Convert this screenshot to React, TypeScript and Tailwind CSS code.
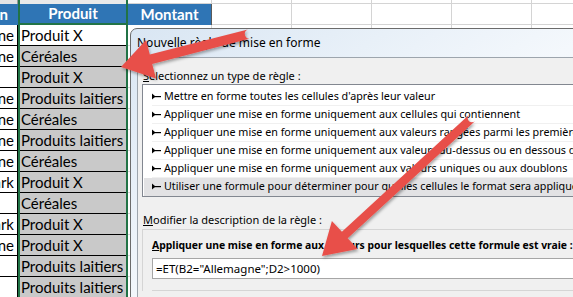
import React from "react";

type Pt = [number, number];

const ROWS: [string, string, boolean][] = [
  ["Allemagne", "Produit X", false],
  ["Allemagne", "Céréales", true],
  ["", "Produit X", true],
  ["Allemagne", "Produits laitiers", true],
  ["Allemagne", "Céréales", true],
  ["Allemagne", "Produits laitiers", true],
  ["Allemagne", "Céréales", true],
  ["Danemark", "Produit X", true],
  ["", "Céréales", true],
  ["Danemark", "Produit X", true],
  ["Allemagne", "Produit X", true],
  ["", "Produits laitiers", true],
  ["", "Produits laitiers", true],
];

const RULES = [
  "Mettre en forme toutes les cellules d'après leur valeur",
  "Appliquer une mise en forme uniquement aux cellules qui contiennent",
  "Appliquer une mise en forme uniquement aux valeurs rangées parmi les premières ou les dernières valeurs",
  "Appliquer une mise en forme uniquement aux valeurs au-dessus ou en dessous de la moyenne",
  "Appliquer une mise en forme uniquement aux valeurs uniques ou aux doublons",
  "Utiliser une formule pour déterminer pour quelles cellules le format sera appliqué",
];

const cellFont = { fontFamily: "Lato, 'Liberation Sans', sans-serif" };
const uiFont = { fontFamily: "'Noto Sans', 'Liberation Sans', sans-serif" };

function arrowPath(tail: Pt, tip: Pt, w: number, L: number, W: number) {
  const dx = tip[0] - tail[0];
  const dy = tip[1] - tail[1];
  const len = Math.hypot(dx, dy);
  const u = [dx / len, dy / len];
  const n = [-u[1], u[0]];
  const base = [tip[0] - u[0] * L, tip[1] - u[1] * L];
  const p = (c: number[], k: number) => `${(c[0] + n[0] * k).toFixed(1)},${(c[1] + n[1] * k).toFixed(1)}`;
  return `M${p(tail, w)} L${p(base, w)} L${p(base, W)} L${tip[0]},${tip[1]} L${p(base, -W)} L${p(base, -w)} L${p(tail, -w)} A${w},${w} 0 0 1 ${p(tail, w)} Z`;
}

function RuleIcon() {
  return (
    <svg width="9" height="7" viewBox="0 0 9 7" className="shrink-0">
      <path d="M0 0.5 L3.5 3.5 L0 6.5 Z" fill="#000" />
      <rect x="2" y="3" width="7" height="1.2" fill="#000" />
    </svg>
  );
}

function GridCells() {
  return (
    <>
      {[0, 1, 2, 3, 4].map((i) => (
        <div key={i} className="w-[80px] h-[21px] shrink-0 border-r border-b border-[#d4d4d4] bg-white" />
      ))}
    </>
  );
}

export default function App() {
  return (
    <div className="relative w-[573px] h-[297px] overflow-hidden bg-white">
      {/* sheet */}
      <div className="flex flex-col" style={cellFont}>
        <div className="flex h-[4px]">
          <div className="w-[18px] shrink-0 bg-[#e4e4e4] border-r border-[#9a9a9a]" />
          <div className="w-[110px] shrink-0 border-x-2 border-[#217346] bg-[#e9e9e9]" />
          <div className="w-[84px] shrink-0 border-r border-b border-[#d4d4d4]" />
          <div className="flex">
            {[0, 1, 2, 3, 4].map((i) => (
              <div key={i} className="w-[80px] h-[4px] shrink-0 border-r border-b border-[#d4d4d4]" />
            ))}
          </div>
        </div>
        <div className="flex h-[21px]">
          <div className="w-[18px] shrink-0 flex justify-end overflow-hidden bg-[#2f75b5] border-r border-[#2f75b5] pr-[9px] text-white font-bold text-[15px] leading-[21px] whitespace-nowrap">
            <span className="shrink-0">Région</span>
          </div>
          <div className="w-[110px] shrink-0 border-x-2 border-b-2 border-[#217346] bg-[#2f75b5] text-white font-bold text-[15px] leading-[19px] text-center">
            Produit
          </div>
          <div className="w-[84px] shrink-0 bg-[#2f75b5] border-r border-[#5a5a5a] text-white font-bold text-[15px] leading-[21px] text-center">
            Montant
          </div>
          <div className="flex">
            <GridCells />
          </div>
        </div>
        {ROWS.map(([a, b, gray], i) => (
          <div key={i} className="flex h-[21px]">
            <div className="w-[18px] shrink-0 flex justify-end overflow-hidden bg-white border-r border-b border-black pr-[3px] text-[15px] leading-[20px] whitespace-nowrap text-black">
              <span className="shrink-0">{a}</span>
            </div>
            <div className="w-[110px] shrink-0 border-x-2 border-[#217346]">
              <div
                className={`h-[21px] border-b border-black pl-[1px] text-[15px] leading-[20px] text-black whitespace-nowrap ${
                  gray ? "bg-[#c9c9c9]" : "bg-white"
                }`}
              >
                {b}
              </div>
            </div>
            <div className="w-[84px] shrink-0 border-r border-b border-[#d4d4d4] bg-white" />
            <div className="flex">
              <GridCells />
            </div>
          </div>
        ))}
      </div>

      {/* dialog window */}
      <div
        className="absolute left-[130px] top-[28px] w-[470px] h-[290px] rounded-tl-[7px] border border-[#6b6b6b] bg-gradient-to-br from-[#d9e6f3] via-[#f4f8fc] to-[#e6eef7] flex flex-col"
        style={uiFont}
      >
        <div className="h-[28px] shrink-0 pl-[6px] flex items-center text-[12px] text-black">
          Nouvelle règle de mise en forme
        </div>
        <div className="flex-1 ml-[6px] border-t border-l border-[#9da5ad] bg-[#f0f0f0] pl-[4px] flex flex-col">
          <div className="mt-[10px] pl-[1px] h-[16px] leading-[16px] text-[11px] text-black">
            <span className="underline">S</span>électionnez un type de règle :
          </div>
          <div className="border border-[#828790] bg-white pt-[3px] pl-[9px] w-[460px]">
            {RULES.map((r, i) => (
              <div
                key={i}
                className={`h-[18px] flex items-center gap-[2px] border-b text-[10.75px] text-black whitespace-nowrap ${
                  i === 5 ? "bg-[#e2e2e4] border-[#e2e2e4] -ml-[8px] pl-[8px]" : "border-[#f0f0f0]"
                }`}
              >
                <RuleIcon />
                <span className="ml-[1px]">{r}</span>
              </div>
            ))}
          </div>
          <div className="mt-[15px] pl-[1px] h-[16px] leading-[16px] text-[11px] text-black">
            <span className="underline">M</span>odifier la description de la règle :
          </div>
          <div className="mt-[1px] border-t border-l border-[#d5d5d5] pl-[9px] pt-[7px] flex flex-col">
            <div className="h-[16px] leading-[16px] text-[10.4px] font-bold text-black whitespace-nowrap">
              <span className="underline">A</span>ppliquer une mise en forme aux valeurs pour lesquelles cette formule est vraie :
            </div>
            <div className="mt-[5px] h-[21px] border border-[#a6a6a6] bg-white pl-[3px] text-[11.5px] leading-[19px] text-black whitespace-nowrap">
              =ET(B2="Allemagne";D2&gt;1000)
            </div>
            <div className="mt-[11px] border-t border-[#d5d5d5]" />
          </div>
        </div>
      </div>

      {/* annotation arrows */}
      <svg className="absolute inset-0 pointer-events-none" width="573" height="297" viewBox="0 0 573 297">
        <defs>
          <filter id="shadow" x="-20%" y="-20%" width="140%" height="140%">
            <feDropShadow dx="1" dy="2" stdDeviation="1.8" floodColor="#000" floodOpacity="0.35" />
          </filter>
        </defs>
        <path d={arrowPath([249, 34], [121, 67], 4.8, 31, 20)} fill="#e8504a" filter="url(#shadow)" />
        <path d={arrowPath([472, 118], [322, 256], 4.3, 31, 19)} fill="#e8504a" filter="url(#shadow)" />
      </svg>
    </div>
  );
}
